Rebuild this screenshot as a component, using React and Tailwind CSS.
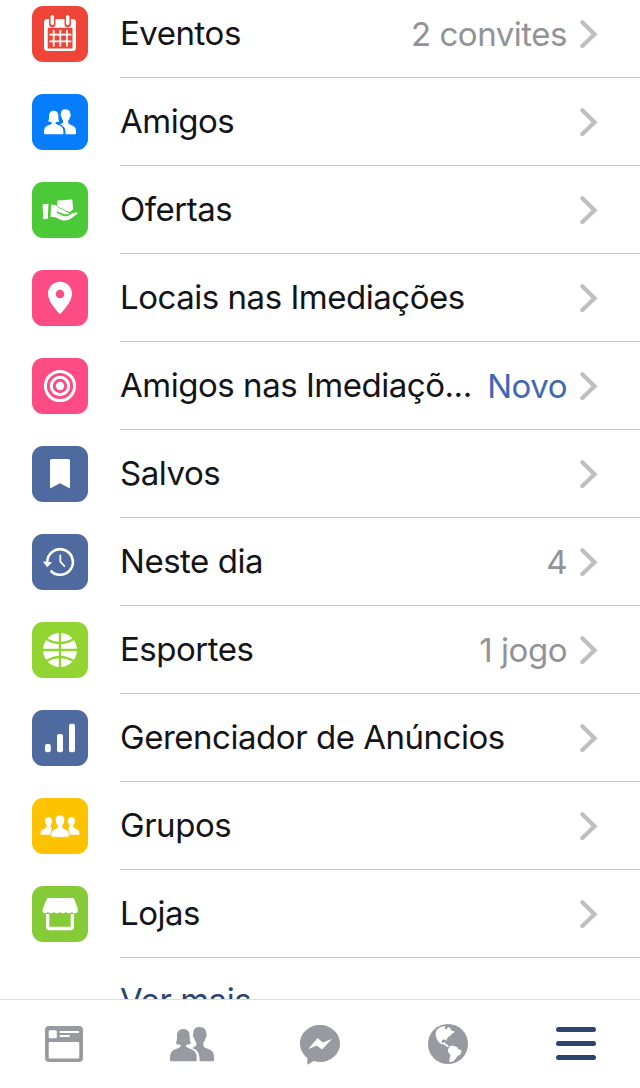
import React from "react";

function CalendarIcon() {
  return (
    <>
      <rect x="12" y="13" width="32" height="32" rx="3.5" fill="#fff" />
      <rect x="15.7" y="21.8" width="24.8" height="20.6" rx="1" fill="#ef4438" />
      <path d="M20.3 10.500v7.500M35.700 10.500v7.500" stroke="#ef4438" strokeWidth="6.400" strokeLinecap="round" />
      <path d="M20.300 10.800v6.800M35.700 10.800v6.800" stroke="#fff" strokeWidth="3.400" strokeLinecap="round" />
      <path d="M21.700 24v16.500M28.300 24v16.500M35 24v16.500M17.400 28.700h22M17.400 35.300h22" stroke="#fff" strokeWidth="1.800" />
    </>
  );
}

function PeopleShape() {
  return (
    <>
      <path d="M13.300 2C9 2 7 5 7 9c0 3.300-.2 5.800-1.200 7.600 1.100.9 2.900 1.200 4.900 1.200v1.700C9.200 21 5.700 21.800 3.300 23.300 1 24.800 0 27.300 0 31.600V33.500q0 .8.800.8h25.100q.8 0 .8-.8v-1.900c0-4.300-1-6.800-3.300-8.300-2.400-1.500-5.900-2.300-7.400-3.800v-1.700c2 0 3.800-.3 4.900-1.200-1-1.800-1.200-4.300-1.200-7.600C19.700 5 17.700 2 13.300 2z" />
      <path d="M29.800 0c-4.500-.2-6.800 2.600-6.500 6.600-.9.800-.4 3.600.8 4.200.3 2.300 1.100 3.700 2.200 4.700v2.700c-.8 1.300-2.500 2-4.300 2.700 5.200 1.800 7.500 4.800 7.500 10.600v2.800h13.700q.8 0 .8-.8v-2.800c0-4-1-6.200-3.400-7.600-2.500-1.400-5.800-2.100-7.200-3.900v-3.700c1.100-1 1.900-2.400 2.200-4.700 1.200-.6 1.600-3.400.7-4.200C36.400 2.600 33.800.2 29.800 0z" />
    </>
  );
}

function FriendsIcon() {
  return (
    <g fill="#fff" transform="translate(12 15.200) scale(.727)">
      <PeopleShape />
    </g>
  );
}

function OffersIcon() {
  return (
    <g fill="#fff">
      <path d="M10.600 22.300 16.500 21.800 15.700 36.800 11.200 37.200z" />
      <path d="M25.400 19.300Q25.400 18.500 26.200 18.400L39.300 17.500Q40.100 17.500 40.300 18.300L41.200 27.200 37.800 30.200 32.500 27.700 25.300 24.300z" />
      <path d="M19.300 22.500 24 23.300 27 26.100 32 28.300 37.500 31.400Q35.500 33 31.500 31.900L25.300 29.200 24.700 30.700 30.700 33.700Q35 35.200 38.500 32.300L40.500 31 45.200 30.200Q46 31.100 44.700 32.300L38.400 37.100Q34 39.700 28.500 37.700L23.500 35.300 18.500 34.900z" />
    </g>
  );
}

function PinIcon() {
  return (
    <path
      fill="#fff"
      fillRule="evenodd"
      d="M28 11.700c-6.800 0-12 5.200-12 11.800C16 30 21.500 37.500 28 44.200 34.500 37.500 40 30 40 23.500c0-6.600-5.200-11.800-12-11.800zM28 19.700a4.300 4.300 0 1 1 0 8.600 4.300 4.300 0 0 1 0-8.600z"
    />
  );
}

function TargetIcon() {
  return (
    <>
      <circle cx="28" cy="28" r="14.600" fill="none" stroke="#fff" strokeWidth="3" />
      <circle cx="28" cy="28" r="8.700" fill="none" stroke="#fff" strokeWidth="3" />
      <circle cx="28" cy="28" r="4.200" fill="#fff" />
    </>
  );
}

function BookmarkIcon() {
  return <path fill="#fff" d="M19.500 12.900h17a1.500 1.500 0 0 1 1.500 1.500v28L28 37.200l-10 5.200v-28a1.500 1.500 0 0 1 1.500-1.500z" />;
}

function HistoryIcon() {
  return (
    <>
      <path d="M15.300 28.500A12.800 12.800 0 1 1 18.600 36.600" fill="none" stroke="#fff" strokeWidth="2.600" />
      <path d="M10.800 27.600 20 28.200 15.200 33.300z" fill="#fff" />
      <path d="M28.300 21.300v6.400l4 4.300" fill="none" stroke="#fff" strokeWidth="1.800" strokeLinecap="round" />
    </>
  );
}

function BasketballIcon() {
  return (
    <>
      <circle cx="28" cy="28" r="17" fill="#fff" />
      <path
        d="M28 10v36M10 28h36M13.500 16.500Q28 25.500 42.500 16.500M13.500 39.500Q28 30.500 42.500 39.500"
        fill="none"
        stroke="#92d431"
        strokeWidth="2.400"
      />
    </>
  );
}

function BarsIcon() {
  return (
    <g fill="#fff">
      <rect x="13" y="34" width="5.800" height="8.200" rx="2" />
      <rect x="25" y="24" width="6" height="18.200" rx="2" />
      <rect x="37" y="13.800" width="6" height="28.400" rx="2" />
    </g>
  );
}

function GroupsIcon() {
  return (
    <g fill="#fff">
      <path d="M16.500 19c-2.500 0-3.600 1.700-3.400 4 .1 2 .7 3.200 1.400 4v2.300c-.9 1.300-3.300 1.500-4.600 2.700-1 .9-1.300 2.400-1.300 4.700h10.600v-6.200l.9-.5c-.8-.3-1.300-.6-1.500-1V27c.7-.8 1.300-2 1.400-4 .2-2.300-1-4-3.500-4z" />
      <path d="M39.500 19c2.500 0 3.600 1.700 3.400 4-.1 2-.7 3.200-1.400 4v2.300c.9 1.300 3.300 1.500 4.600 2.700 1 .9 1.300 2.400 1.300 4.700H36.800v-6.200l-.9-.5c.8-.3 1.300-.6 1.500-1V27c-.7-.8-1.300-2-1.400-4-.2-2.300 1-4 3.500-4z" />
      <path
        d="M28 17c-3.200 0-4.900 2.100-4.700 5 .1 2.600.9 4.300 2 5.300v2.200c-1 1.500-3.500 1.600-5.100 3.100-1.200 1.200-1.500 3.200-1.500 6.300q9.300 1.200 18.600 0c0-3.100-.3-5.100-1.500-6.300-1.600-1.500-4.100-1.600-5.100-3.100v-2.200c1.100-1 1.900-2.700 2-5.300.2-2.900-1.500-5-4.700-5z"
        stroke="#fdc200"
        strokeWidth=".8"
      />
    </g>
  );
}

function StoreIcon() {
  return (
    <>
      <path d="M15.700 28v13a1.500 1.500 0 0 0 1.500 1.500h21.600a1.500 1.500 0 0 0 1.500-1.500V28" fill="none" stroke="#fff" strokeWidth="3.300" />
      <path
        fill="#fff"
        d="M15.500 12h25q1.300 0 1.900 1.300L45.700 22.500c.8 2.600-.5 4.800-2.700 4.800-1.700 0-2.600-.7-3-1.300-.6.600-1.700 1.300-3 1.300s-2.400-.7-3-1.300c-.6.600-1.700 1.300-3 1.300s-2.400-.7-3-1.300c-.6.600-1.700 1.300-3 1.300s-2.400-.7-3-1.300c-.6.600-1.700 1.300-3 1.300s-2.400-.7-3-1.300c-.6.600-1.700 1.300-3 1.300-2.200 0-2.900-2.200-2.100-4.800l3.700-9.200q.6-1.300 1.900-1.300z"
      />
    </>
  );
}

function FeedTab() {
  return (
    <svg className="h-9 w-[38px]" viewBox="0 0 38 36" fill="#9899a1">
      <path
        fillRule="evenodd"
        d="M4 0h30a4 4 0 0 1 4 4v28a4 4 0 0 1-4 4H4a4 4 0 0 1-4-4V4a4 4 0 0 1 4-4zM5 4.300a1.300 1.300 0 0 0-1.300 1.300V11A1.300 1.300 0 0 0 5 12.300h5.500a1.300 1.300 0 0 0 1.300-1.300V5.600a1.300 1.300 0 0 0-1.300-1.300zM14.700 5v2H34v-2zM14.700 9v2h10v-2zM5 16a1.300 1.300 0 0 0-1.300 1.300v14A1.300 1.300 0 0 0 5 32.600h28a1.300 1.300 0 0 0 1.300-1.300v-14A1.300 1.300 0 0 0 33 16z"
      />
    </svg>
  );
}

function FriendsTab() {
  return (
    <svg className="h-[35px] w-11" viewBox="0 0 44 35" fill="#9899a1">
      <PeopleShape />
    </svg>
  );
}

function MessengerTab() {
  return (
    <svg className="mt-px h-10 w-10" viewBox="0 0 40 40">
      <path fill="#9899a1" d="M20 0c11 0 20 8.200 20 18.500S31 37 20 37c-2.200 0-4.300-.3-6.200-.9L7.300 39.800V32.800C2.800 29.400 0 24.300 0 18.500 0 8.200 9 0 20 0z" />
      <path fill="#fff" d="M8 24.200 17.600 13 22.700 17.400 32.200 13.700 22 24.500 16.700 20.400z" />
    </svg>
  );
}

function GlobeTab() {
  return (
    <svg className="h-10 w-10" viewBox="0 0 40 40">
      <circle cx="20" cy="20" r="20" fill="#9899a1" />
      <g fill="#fff">
        <path d="M8.500 6.300 12 3.200 17.400 1.800 16.800 4.300 18.300 5.600 20.200 3 22.500 4.200 22.800 6.300 26.500 7.600 25.300 9.400 23.600 9.600 22.800 11.600 20.400 12.800 18.800 15 18.900 17 17.500 15.500 14.500 15.700 13.400 17.300 14.500 19 17 18 17.600 20 19.800 20.700 20.300 22.500 22 22.300 21.200 23.300 18.600 22.600 16.400 20.700 13 19.900 9.800 17 8.300 13.500 7.500 10z" />
        <path d="M22.500 21.800 25.200 21.700 29 23 30.300 25 33.800 26.600 32.400 30.500 29.500 32 27.400 35 25.200 37.600 21.500 38.200 21.300 35.500 22.500 31.200 20 27.800 20 25z" />
      </g>
    </svg>
  );
}

function MenuTab() {
  return (
    <div className="mb-[2px] flex w-10 flex-col gap-[9px]">
      <div className="h-[5px] rounded-full bg-[#2b4570]" />
      <div className="h-[5px] rounded-full bg-[#2b4570]" />
      <div className="h-[5px] rounded-full bg-[#2b4570]" />
    </div>
  );
}

const rows = [
  { label: "Eventos", tile: "bg-[#ef4438]", Icon: CalendarIcon, note: "2 convites" },
  { label: "Amigos", tile: "bg-[#057dfc]", Icon: FriendsIcon },
  { label: "Ofertas", tile: "bg-[#4bc936]", Icon: OffersIcon },
  { label: "Locais nas Imediações", tile: "bg-[#fc4c83]", Icon: PinIcon },
  { label: "Amigos nas Imediaçõ...", tile: "bg-[#fc4c83]", Icon: TargetIcon, note: "Novo", highlight: true },
  { label: "Salvos", tile: "bg-[#4e6a9f]", Icon: BookmarkIcon },
  { label: "Neste dia", tile: "bg-[#4e6a9f]", Icon: HistoryIcon, note: "4" },
  { label: "Esportes", tile: "bg-[#92d431]", Icon: BasketballIcon, note: "1 jogo" },
  { label: "Gerenciador de Anúncios", tile: "bg-[#4e6a9f]", Icon: BarsIcon },
  { label: "Grupos", tile: "bg-[#fdc200]", Icon: GroupsIcon },
  { label: "Lojas", tile: "bg-[#85cb38]", Icon: StoreIcon },
];

function Row({ label, tile, Icon, note, highlight }) {
  return (
    <li className="flex h-[88px] shrink-0 gap-8 pl-8">
      <div className={`mt-4 size-14 shrink-0 overflow-hidden rounded-[11px] ${tile}`}>
        <svg className="size-14" viewBox="0 0 56 56">
          <Icon />
        </svg>
      </div>
      <div className="flex flex-1 items-center border-b border-[#c8c7cc] pr-[42px]">
        <span className="flex-1 pb-0.5 whitespace-nowrap text-[#141418]">{label}</span>
        {note && <span className={`whitespace-nowrap ${highlight ? "text-[#4267b2]" : "text-[#929297]"}`}>{note}</span>}
        <svg className="ml-[13px] h-7 w-[18px]" viewBox="0 0 18 28" fill="none" stroke="#bdbfc4" strokeWidth="4.200" strokeLinecap="round">
          <path d="M2.300 2.300 14.600 14.300 2.300 26" />
        </svg>
      </div>
    </li>
  );
}

export default function App() {
  return (
    <div className="flex h-[1088px] w-[640px] flex-col overflow-hidden bg-white font-['Inter',sans-serif] text-[33px] leading-10 tracking-[-0.47px]">
      <main className="h-[999px] shrink-0 overflow-hidden">
        <ul className="-mt-2.5 flex flex-col">
          {rows.map((row) => (
            <Row key={row.label} {...row} />
          ))}
          <li className="flex h-[88px] items-center pb-1 pl-[120px] text-[#2b4570]">Ver mais</li>
        </ul>
      </main>
      <nav className="grid h-[89px] shrink-0 grid-cols-5 place-items-center border-t border-[#dcdce0] bg-white">
        <FeedTab />
        <FriendsTab />
        <MessengerTab />
        <GlobeTab />
        <MenuTab />
      </nav>
    </div>
  );
}
